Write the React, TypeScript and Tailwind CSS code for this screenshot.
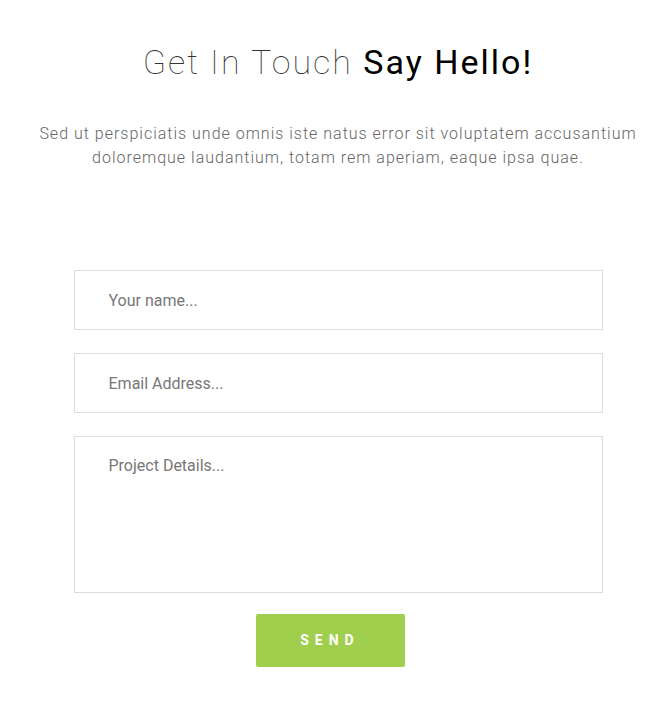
export default function App() {
  return (
    <div className="min-h-[702px] bg-white pl-[25px] font-['Roboto',sans-serif]">
      <div className="flex flex-col items-center pt-[40px]">
        <h2 className="text-[34px] leading-[44px] tracking-[2px] text-black">
          <span className="font-thin text-[#333]">Get In Touch</span>{" "}
          <span className="font-normal">Say Hello!</span>
        </h2>
        <p className="mt-[38px] w-[620px] text-center text-[16px] font-light leading-[24px] tracking-[1px] text-[#666]">
          Sed ut perspiciatis unde omnis iste natus error sit voluptatem accusantium doloremque laudantium, totam rem aperiam, eaque ipsa quae.
        </p>

        <form className="mt-[100px] flex w-[529px] flex-col gap-[23px]">
          <input
            type="text"
            placeholder="Your name..."
            className="h-[60px] border border-[#ddd] px-[34px] text-[16px] text-[#555] outline-none placeholder:text-[#777]"
          />
          <input
            type="email"
            placeholder="Email Address..."
            className="h-[60px] border border-[#ddd] px-[34px] text-[16px] text-[#555] outline-none placeholder:text-[#777]"
          />
          <textarea
            placeholder="Project Details..."
            className="h-[157px] resize-none border border-[#ddd] px-[34px] pt-[17px] text-[16px] text-[#555] outline-none placeholder:text-[#777]"
          />
        </form>

        <button className="mt-[21px] mr-[16px] h-[53px] w-[149px] rounded-[2px] bg-[#a0cf4d] text-[14px] font-bold tracking-[6px] text-white">
          SEND
        </button>
      </div>
    </div>
  );
}
